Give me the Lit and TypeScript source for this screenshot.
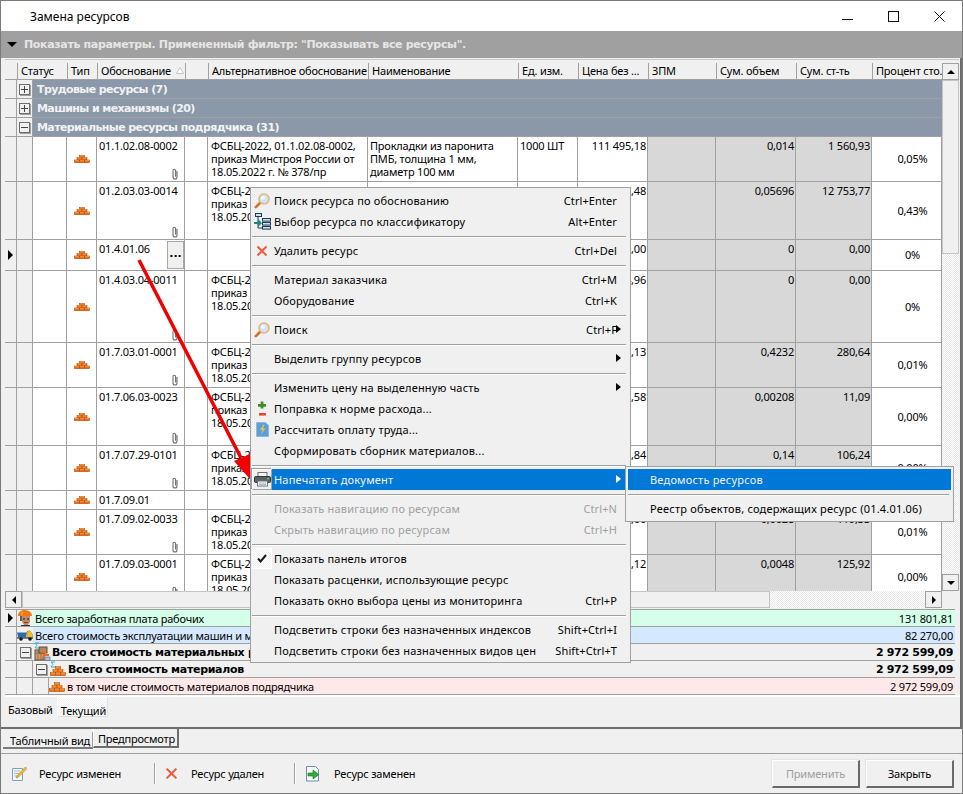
import { LitElement, html, css, svg, nothing, unsafeCSS } from "lit";
import { customElement } from "lit/decorators.js";

const COLS = [12, 16, 34, 30, 88, 23, 160, 150, 60, 70, 68, 80, 76, 70];
const colTemplate = unsafeCSS(COLS.map((c) => c + "px").join(" "));

const icon = (w: number, h: number, body: unknown) =>
  html`<svg class="ico" width=${w} height=${h} viewBox="0 0 ${w} ${h}">${body}</svg>`;

const brick = () =>
  icon(16, 8, svg`
    <g fill="#e8701a" stroke="#b04a08" stroke-width=".6">
      <rect x=".5" y="5" width="5" height="2.6"/><rect x="5.5" y="5" width="5" height="2.6"/><rect x="10.5" y="5" width="5" height="2.6"/>
      <rect x="3" y="2.6" width="5" height="2.4"/><rect x="8" y="2.6" width="5" height="2.4"/>
      <rect x="5.5" y=".4" width="5" height="2.2"/>
    </g>
    <path d="M1 5.4h4M6 5.4h4M11 5.4h4M3.500 3h4M8.500 3h4M6 .8h4" stroke="#ffb060" stroke-width=".7"/>`);

const brickBig = () =>
  icon(16, 11, svg`
    <g fill="#ec7a1c" stroke="#b04a08" stroke-width=".6">
      <rect x=".5" y="7.5" width="5" height="3"/><rect x="5.5" y="7.5" width="5" height="3"/><rect x="10.5" y="7.5" width="5" height="3"/>
      <rect x="3" y="4.5" width="5" height="3"/><rect x="8" y="4.5" width="5" height="3"/>
      <rect x="5.5" y="1.5" width="5" height="3"/>
    </g>
    <path d="M1 8h4M6 8h4M11 8h4M3.500 5h4M8.500 5h4M6 2h4" stroke="#ffb868" stroke-width=".7"/>`);

const sigmaMark = () =>
  html`<svg class="sigma" width="6" height="7" viewBox="0 0 6 7"><path d="M5 1H1l2 2.500L1 6h4" fill="none" stroke="#28b4d8" stroke-width="1"/></svg>`;

const sigmaBrick = () => html`<span class="sigma-wrap">${brickBig()}${sigmaMark()}</span>`;

const clip = () =>
  icon(8, 12, svg`<path d="M6 3v6a2 2 0 0 1-4 0V2.600a1.300 1.300 0 0 1 2.600 0V8.500" fill="none" stroke="#6f6f6f" stroke-width="1.100"/>`);

const lens = () =>
  icon(16, 16, svg`
    <path d="M6.500 9.500 1.800 14.200" stroke="#d07428" stroke-width="2.600" stroke-linecap="round"/>
    <circle cx="10" cy="6" r="5" fill="#d0e2f6" stroke="#e6b27c" stroke-width="1.500"/>
    <circle cx="9" cy="5" r="2" fill="#f6faff"/>`);

const treeIco = () =>
  icon(17, 17, svg`
    <rect x="1.500" y=".5" width="6" height="3" fill="#cfe0ee" stroke="#1e3d54"/>
    <rect x="8.500" y="5.500" width="8" height="2.600" fill="#cfe0ee" stroke="#1e3d54"/>
    <rect x="8.500" y="9.500" width="8" height="2.600" fill="#cfe0ee" stroke="#1e3d54"/>
    <rect x="8.500" y="13.500" width="8" height="2.600" fill="#cfe0ee" stroke="#1e3d54"/>
    <path d="M4 4v11h4" fill="none" stroke="#1e3d54"/>
    <path d="M0 9h4V6l4 4-4 4v-3H0z" fill="#178a86"/>`);

const redX = (s = 12) =>
  icon(s, s, svg`<path d="M1.500 1.500 10.500 10.500M10.500 1.500 1.500 10.500" stroke="#f0583a" stroke-width="1.900" transform="scale(${s / 12})"/>`);

const plusMinus = () =>
  icon(9, 16, svg`
    <path d="M3 1h3v3h3v3H6v2H3V7H0V4h3z" fill="#3c8c20" transform="translate(0 -.5) scale(.9)"/>
    <rect x="1" y="12" width="7" height="2.600" fill="#e8482a"/>`);

const calcIco = () =>
  icon(13, 15, svg`
    <path d="M.5.500h9l3 3v11H.5z" fill="#5aa0e0" stroke="#8eb8dc"/>
    <path d="M7.500 2.500 4 8h2.500L5 12.500 9.500 6.500H7L8.500 2.500z" fill="#f4c430"/>`);

const printer = () =>
  icon(17, 15, svg`
    <rect x="4" y=".5" width="9" height="5" fill="#f2f2f2" stroke="#707070"/>
    <rect x=".5" y="4.500" width="16" height="6" rx="1" fill="#5a6068" stroke="#33373c"/>
    <rect x="13" y="6" width="2" height="1.400" fill="#5fd04a"/>
    <rect x="3.500" y="9" width="10" height="5" fill="#fff" stroke="#707070"/>
    <path d="M5 11h7M5 12.600h7" stroke="#9ab4d8"/>`);

const check = () =>
  icon(10, 9, svg`<path d="M1 4.500 3.600 7.500 9 1" fill="none" stroke="#1a1a1a" stroke-width="2"/>`);

const worker = () =>
  icon(16, 16, svg`
    <path d="M5 6h8v6l-2 3H7L5 12z" fill="#c08a68"/>
    <path d="M6 9h2M10 9h2" stroke="#221a14"/>
    <path d="M7 12.500h4" stroke="#7a3c24"/>
    <path d="M1 6c0-4 3-6 6.500-6S15 2 15 6H4z" fill="#f07a18"/>
    <path d="M5 1.500v4" stroke="#ffb060"/>
    <path d="M4 15h9v1H4z" fill="#303840"/>
    <path d="M4 6v5" stroke="#3a2a20" stroke-width="1.500"/>`);

const truck = () =>
  icon(17, 12, svg`
    <path d="M0 3.500h10L9 8H1z" fill="#2e6ab4"/>
    <path d="M10 2h3l3 4v3H10z" fill="#f0c020" stroke="#a08010" stroke-width=".5"/>
    <rect x="0" y="8" width="17" height="1.800" fill="#5a6a7a"/>
    <circle cx="4" cy="10" r="1.800" fill="#181818"/><circle cx="13" cy="10" r="1.800" fill="#181818"/>`);

const crate = () =>
  html`<span class="sigma-wrap">${icon(17, 15, svg`
    <rect x="1" y="4" width="9" height="10" fill="#c8a078" stroke="#6b4a30"/>
    <path d="M1 7h9M4 4v10M7 4v10" stroke="#8a6848" stroke-width=".8"/>
    <rect x="5" y="1" width="8" height="6" fill="#b08868" stroke="#6b4a30"/>
    <path d="M7 6h5M9 9h6M8 12h7" stroke="#e8701a" stroke-width="2"/>
    <rect x="11" y="11" width="5" height="3.500" fill="#a6c4dc" stroke="#506a80" stroke-width=".6"/>`)}${sigmaMark()}</span>`;

const noteIco = () =>
  icon(15, 15, svg`
    <path d="M.5 2.500h10v12H.5z" fill="#f4f8fc" stroke="#7ea2c0"/>
    <path d="M2 5h6M2 7.500h5M2 10h4" stroke="#a8bccc"/>
    <path d="M13.500 1 15 2.500 6.500 11 4.200 12 5 9.500z" fill="#f0c030" stroke="#b07818" stroke-width=".6"/>`);

const replaceIco = () =>
  icon(15, 16, svg`
    <path d="M.5.500h9l3 3v11.500H.5z" fill="#f4f8fc" stroke="#6f8da8"/>
    <path d="M2 7h5V4l6 4.500L7 13v-3H2z" fill="#36a838" stroke="#1c7420" stroke-width=".6"/>`);

interface Row {
  h: number; code: string; alt?: boolean; name?: string[]; unit?: string; price: string;
  vol: string; sum: string; pct: string; clip?: boolean; btn?: boolean; current?: boolean;
}

const ROWS: Row[] = [
  { h: 45, code: "01.1.02.08-0002", alt: true, name: ["Прокладки из паронита", "ПМБ, толщина 1 мм,", "диаметр 100 мм"], unit: "1000 ШТ", price: "111 495,18", vol: "0,014", sum: "1 560,93", pct: "0,05%", clip: true },
  { h: 58, code: "01.2.03.03-0014", alt: true, name: ["Материалы"], unit: "т", price: "223 907,48", vol: "0,05696", sum: "12 753,77", pct: "0,43%", clip: true },
  { h: 31, code: "01.4.01.06", price: "0,00", vol: "0", sum: "0,00", pct: "0%", btn: true, current: true },
  { h: 72, code: "01.4.03.04-0011", alt: true, price: "1 234,96", vol: "0", sum: "0,00", pct: "0%", clip: true },
  { h: 45, code: "01.7.03.01-0001", alt: true, price: "663,13", vol: "0,4232", sum: "280,64", pct: "0,01%", clip: true },
  { h: 58, code: "01.7.06.03-0023", alt: true, price: "5 331,58", vol: "0,00208", sum: "11,09", pct: "0,00%", clip: true },
  { h: 45, code: "01.7.07.29-0101", alt: true, price: "758,84", vol: "0,14", sum: "106,24", pct: "0,00%", clip: true },
  { h: 19, code: "01.7.09.01", price: "0,00", vol: "0", sum: "0,00", pct: "0%" },
  { h: 45, code: "01.7.09.02-0033", alt: true, price: "42 618,00", vol: "0,0028", sum: "119,33", pct: "0,01%", clip: true },
  { h: 45, code: "01.7.09.03-0001", alt: true, price: "26 233,12", vol: "0,0048", sum: "125,92", pct: "0,00%", clip: true },
];

const HEAD: string[] = [
  "Статус", "Тип", "Обоснование", "", "Альтернативное обоснование",
  "Наименование", "Ед. изм.", "Цена без ...", "ЗПМ", "Сум. объем",
  "Сум. ст-ть", "Процент сто.",
];

type MenuEntry = "sep" | { t: string; k?: string; i?: unknown; sub?: boolean; dis?: boolean; sel?: boolean; chk?: boolean };
const MENU: MenuEntry[] = [
  { t: "Поиск ресурса по обоснованию", k: "Ctrl+Enter", i: lens() },
  { t: "Выбор ресурса по классификатору", k: "Alt+Enter", i: treeIco() },
  "sep",
  { t: "Удалить ресурс", k: "Ctrl+Del", i: redX() },
  "sep",
  { t: "Материал заказчика", k: "Ctrl+M" },
  { t: "Оборудование", k: "Ctrl+K" },
  "sep",
  { t: "Поиск", k: "Ctrl+F", i: lens(), sub: true },
  "sep",
  { t: "Выделить группу ресурсов", sub: true },
  "sep",
  { t: "Изменить цену на выделенную часть", sub: true },
  { t: "Поправка к норме расхода...", i: plusMinus() },
  { t: "Рассчитать оплату труда...", i: calcIco() },
  { t: "Сформировать сборник материалов..." },
  "sep",
  { t: "Напечатать документ", i: printer(), sub: true, sel: true },
  "sep",
  { t: "Показать навигацию по ресурсам", k: "Ctrl+N", dis: true },
  { t: "Скрыть навигацию по ресурсам", k: "Ctrl+H", dis: true },
  "sep",
  { t: "Показать панель итогов", i: check(), chk: true },
  { t: "Показать расценки, использующие ресурс" },
  { t: "Показать окно выбора цены из мониторинга", k: "Ctrl+P" },
  "sep",
  { t: "Подсветить строки без назначенных индексов", k: "Shift+Ctrl+I" },
  { t: "Подсветить строки без назначенных видов цен", k: "Shift+Ctrl+T" },
];

@customElement("app-root")
export class AppRoot extends LitElement {
  static styles = css`
    :host {
      display: block; position: relative; width: 963px; height: 794px; overflow: hidden;
      font: 11px/13px "Noto Sans", "Open Sans", sans-serif; letter-spacing: -.2px; color: #000; background: #f0f0f0;
    }
    * { box-sizing: border-box; }
    .ico { display: block; flex: none; }
    .win { height: 794px; display: flex; flex-direction: column; border: 1px solid #7a7a7a; }
    .title { height: 30px; flex: none; background: #fff; display: flex; align-items: center; padding-left: 29px; font-size: 12px; letter-spacing: 0; }
    .title span { flex: 1; }
    .wc { width: 46px; height: 30px; display: flex; align-items: center; justify-content: center; }
    .page { flex: none; height: 698px; border-right: 2px solid #6d6d6d; border-bottom: 2px solid #6d6d6d; display: flex; flex-direction: column; }
    .filter {
      height: 27px; flex: none; background: #a0a0a0; color: #e6e6e6; display: flex; align-items: center; gap: 7px; padding-left: 5px;
      font: bold 11px "DejaVu Sans", sans-serif; letter-spacing: -.34px; margin-right: -2px;
    }
    .tri-down { width: 0; height: 0; border: 5px solid transparent; border-top: 5px solid #000; border-bottom: 0; margin-left: 1px; }
    .table { margin: 1px 0 0 4px; padding-top: 3px; height: 548px; flex: none; border-top: 1px solid #c8c8c8; background: #f0f0f0; width: 954px; display: flex; flex-direction: column; }
    .main { display: flex; height: 528px; flex: none; }
    .grid { width: 937px; flex: none; overflow: hidden; background: #fff; }
    .r { display: grid; grid-template-columns: ${colTemplate}; }
    .head { height: 17px; background: #f0f0f0; grid-template-columns: 12px 50px 30px 88px 23px 160px 150px 60px 70px 68px 80px 76px 70px; border-bottom: 1px solid #a0a0a0; }
    .hc { border-left: 1px solid #a0a0a0; padding: 1px 0 0 3px; white-space: nowrap; overflow: hidden; line-height: 14px; position: relative; }
    .sort { position: absolute; right: 1px; top: 4px; }
    .grp { height: 19px; display: flex; background: #f0f0f0; border-bottom: 1px solid #a0a0a0; }
    .ind { width: 12px; flex: none; background: #f0f0f0; border-right: 1px solid #a0a0a0; display: flex; align-items: center; justify-content: center; }
    .exp { width: 16px; flex: none; display: flex; align-items: center; justify-content: center; border-right: 1px solid #a0a0a0; }
    .box { width: 11px; height: 11px; border: 1px solid #6d6d6d; background: #f0f0f0; position: relative; box-shadow: 1px 1px 0 #a0a0a0; }
    .box::before { content: ""; position: absolute; left: 1px; right: 1px; top: 4px; height: 1px; background: #444; }
    .box.plus::after { content: ""; position: absolute; top: 1px; bottom: 1px; left: 4px; width: 1px; background: #444; }
    .gt { flex: 1; background: #8b98a9; color: #f2f2f2; padding: 1px 0 0 4px; font: bold 11px/18px "DejaVu Sans", sans-serif; letter-spacing: -.6px; white-space: nowrap; }
    .c { background: #fff; border-right: 1px solid #a0a0a0; border-bottom: 1px solid #a0a0a0; padding: 2px 1px 0 2px; white-space: nowrap; overflow: hidden; position: relative; }
    .c.side { background: #f0f0f0; padding: 0; display: flex; align-items: center; justify-content: center; }
    .c.g { background: #d8d8d8; }
    .c.num { text-align: right; }
    .c.mid { display: flex; align-items: center; justify-content: center; padding: 0; }
    .c.pct { display: flex; align-items: center; justify-content: center; padding: 0 0 1px 12px; }
    .c.alt { padding-left: 3px; }
    .clip { position: absolute; right: 5px; bottom: 1px; }
    .dots { position: absolute; right: 0; top: 1px; width: 17px; height: 28px; background: #f0f0f0; border: 1px solid #a8a8a8; font: bold 11px/24px "DejaVu Sans", sans-serif; text-align: center; letter-spacing: 0; }
    .tri-r { width: 0; height: 0; border: 5px solid transparent; border-left: 5px solid #000; border-right: 0; }
    .vs { width: 17px; flex: none; display: flex; flex-direction: column; background: repeating-conic-gradient(#fff 0 25%, #e8e8e8 0 50%) 0 0 / 2px 2px; }
    .sb { flex: none; width: 17px; height: 17px; background: #f0f0f0; border: 1px solid #a0a0a0; display: flex; align-items: center; justify-content: center; }
    .thumb { background: #f0f0f0; border: 1px solid #c4c4c4; }
    .thumb.v { height: 174px; }
    .thumb.h { width: 748px; }
    .tri-u { width: 0; height: 0; border: 4px solid transparent; border-bottom: 4px solid #000; border-top: 0; }
    .tri-d { width: 0; height: 0; border: 4px solid transparent; border-top: 4px solid #000; border-bottom: 0; }
    .tri-l { width: 0; height: 0; border: 4px solid transparent; border-right: 4px solid #000; border-left: 0; }
    .tri-rs { width: 0; height: 0; border: 4px solid transparent; border-left: 4px solid #000; border-right: 0; }
    .hs { height: 17px; width: 937px; flex: none; display: flex; background: repeating-conic-gradient(#fff 0 25%, #e8e8e8 0 50%) 0 0 / 2px 2px; }
    .foot { margin: 2px 0 0 4px; width: 950px; height: 86px; flex: none; border-top: 1px solid #a0a0a0; }
    .fr { height: 17px; display: flex; border-bottom: 1px solid #a0a0a0; align-items: stretch; }
    .fr .fi { width: 16px; flex: none; display: flex; align-items: center; justify-content: center; }
    .fr .lab { flex: 1; display: flex; justify-content: space-between; padding: 0 2px; line-height: 17px; white-space: nowrap; }
    .fr .lab.b { font: bold 11px/17px "DejaVu Sans", sans-serif; letter-spacing: -.3px; }
    .indent { flex: none; width: 16px; border-right: 1px solid #a0a0a0; }
    .fexp { width: 17px; flex: none; padding-left: 3px; display: flex; align-items: center; }
    .green { background: #d4ffe8; } .blue { background: #d4e8ff; } .pink { background: #ffe8e8; }
    .whiteline { height: 2px; flex: none; background: #fff; margin-left: 4px; }
    .subtabs { flex: none; display: flex; align-items: flex-start; padding-left: 6px; }
    .subtabs .st { padding: 6px 4px 0 1px; height: 20px; }
    .subtabs .on { padding: 6px 3px 0 3px; height: 20px; background: repeating-conic-gradient(#fff 0 25%, #f0f0f0 0 50%) 0 0 / 2px 2px; border: 1px solid #fff; border-right-color: #e0e0e0; border-bottom-color: #e0e0e0; width: 51px; }
    .pagetabs { height: 25px; flex: none; display: flex; align-items: flex-start; padding-left: 2px; border-bottom: 1px solid #a0a0a0; }
    .pt1 { width: 90px; height: 17px; margin-top: 3px; border-right: 1px solid #a0a0a0; border-bottom: 2px solid #7a7a7a; padding: 2px 0 0 7px; line-height: 14px; }
    .pt2 { width: 86px; height: 19px; border: 1px solid #6d6d6d; border-top-width: 0; border-left-color: #fff; border-right-width: 2px; border-bottom-width: 2px; padding: 3px 0 0 4px; line-height: 13px; background: #f0f0f0; }
    .status { flex: 1; display: flex; align-items: center; padding: 0 8px 0 11px; }
    .status .txt { margin-left: 13px; }
    .status .txt.w1 { width: 115px; margin-left: 12px; }
    .status .txt.w2 { width: 103px; }
    .status .gap { width: 10px; flex: none; }
    .status .gap.g9 { width: 9px; }
    .status .gapb { width: 6px; flex: none; }
    .vsep { width: 2px; height: 21px; border-left: 1px solid #a0a0a0; border-right: 1px solid #fff; flex: none; }
    .grow { flex: 1; }
    .btn { width: 88px; height: 28px; display: flex; align-items: center; justify-content: center; background: #f0f0f0; border: 1px solid #fff; border-right: 2px solid #696969; border-bottom: 2px solid #696969; box-shadow: -1px -1px 0 #e4e4e4; }
    .btn.dis { color: #a0a0a0; }
    .menu { position: absolute; z-index: 3; left: 250px; top: 187px; width: 381px; height: 476px; background: #f0f0f0; border: 1px solid #a0a0a0; padding: 2px 2px 0 1px; letter-spacing: .2px; }
    .sub { position: absolute; z-index: 4; left: 625px; top: 466px; width: 329px; height: 56px; background: #f0f0f0; border: 1px solid #a0a0a0; padding: 2px; letter-spacing: .2px; }
    .mi { height: 21px; display: flex; align-items: center; color: #000; position: relative; }
    .mi .mic { width: 20px; height: 21px; flex: none; display: flex; align-items: center; justify-content: center; }
    .mi .mt { flex: 1; padding-left: 2px; white-space: nowrap; }
    .mi .mk { padding-right: 11px; white-space: nowrap; letter-spacing: .1px; }
    .mi .ar { position: absolute; right: 7px; top: 6px; width: 0; height: 0; border: 4px solid transparent; border-left: 5px solid #000; border-right: 0; }
    .mi.dis { color: #a0a0a0; }
    .mi.sel .mt { background: none; color: #f2f2f2; height: 21px; line-height: 21px; position: relative; }
    .mi.sel .fill { position: absolute; left: 20px; right: -1px; top: 0; bottom: 0; background: #0078d7; }
    .mi.sel .ar { border-left-color: #fff; }
    .mi.sel .mic { border: 1px solid #fff; border-right-color: #a0a0a0; border-bottom-color: #a0a0a0; box-shadow: -1px -1px 0 #a0a0a0; }
    .mi .mic.chk { background: repeating-conic-gradient(#fff 0 25%, #f0f0f0 0 50%) 0 0 / 2px 2px; border: 1px solid #fff; }
    .msep { height: 8px; display: flex; align-items: center; padding-right: 2px; }
    .msep::before { content: ""; flex: 1; height: 1px; background: #a0a0a0; box-shadow: 0 1px 0 #fff; }
    .sub .mi { padding-left: 22px; }
    .sub .mi.sel { background: #0078d7; color: #f2f2f2; }
    .arrow { position: absolute; left: 0; top: 0; z-index: 2; pointer-events: none; }
    .sigma-wrap { position: relative; display: block; }
    .sigma { position: absolute; left: 0; top: -2px; }
    .sigma-wrap .ico:first-child { margin-top: 2px; }
  `;

  private groupRow(label: string, open: boolean) {
    return html`<div class="grp"><div class="ind"></div><div class="exp"><div class="box ${open ? "" : "plus"}"></div></div><div class="gt">${label}</div></div>`;
  }

  private dataRow(r: Row) {
    return html`<div class="r" style="height:${r.h}px">
      <div class="c side">${r.current ? html`<div class="tri-r"></div>` : nothing}</div>
      <div class="c side"></div>
      <div class="c"></div>
      <div class="c mid">${brick()}</div>
      <div class="c">${r.code}${r.clip ? html`<span class="clip">${clip()}</span>` : nothing}${r.btn ? html`<span class="dots">...</span>` : nothing}</div>
      <div class="c"></div>
      <div class="c alt">${r.alt ? html`ФСБЦ-2022, ${r.code},<br />приказ Минстроя России от<br />18.05.2022 г. № 378/пр` : nothing}</div>
      <div class="c">${(r.name ?? []).map((l) => html`${l}<br />`)}</div>
      <div class="c">${r.unit ?? ""}</div>
      <div class="c num">${r.price}</div>
      <div class="c g"></div>
      <div class="c g num">${r.vol}</div>
      <div class="c g num">${r.sum}</div>
      <div class="c pct">${r.pct}</div>
    </div>`;
  }

  private menuItem(m: Exclude<MenuEntry, "sep">) {
    return html`<div class="mi ${m.dis ? "dis" : ""} ${m.sel ? "sel" : ""}">
      ${m.sel ? html`<div class="fill"></div>` : nothing}
      <div class="mic ${m.chk ? "chk" : ""}">${m.i ?? nothing}</div>
      <div class="mt">${m.t}</div>
      ${m.k ? html`<div class="mk">${m.k}</div>` : nothing}
      ${m.sub ? html`<div class="ar"></div>` : nothing}
    </div>`;
  }

  render() {
    return html`
      <div class="win">
        <div class="title">
          <span>Замена ресурсов</span>
          <div class="wc"><svg width="11" height="10"><path d="M0 8.500h11" stroke="#111"/></svg></div>
          <div class="wc"><svg width="11" height="11"><rect x=".5" y=".5" width="10" height="10" fill="none" stroke="#111"/></svg></div>
          <div class="wc"><svg width="11" height="11"><path d="M.5.500 10.500 10.500M10.500.5.500 10.500" stroke="#111"/></svg></div>
        </div>
        <div class="page">
          <div class="filter"><div class="tri-down"></div>Показать параметры. Примененный фильтр: "Показывать все ресурсы".</div>
          <div class="table">
            <div class="main">
              <div class="grid">
                <div class="r head">
                  <div></div>
                  ${HEAD.map((t, i) => html`<div class="hc">${t}${i === 2 ? html`<svg class="sort" width="8" height="7"><path d="M4 .5 7.500 6.500H.5z" fill="#fff" stroke="#c4c4c4"/></svg>` : nothing}</div>`)}
                </div>
                ${this.groupRow("Трудовые ресурсы (7)", false)}
                ${this.groupRow("Машины и механизмы (20)", false)}
                ${this.groupRow("Материальные ресурсы подрядчика (31)", true)}
                ${ROWS.map((r) => this.dataRow(r))}
              </div>
              <div class="vs">
                <div class="sb"><div class="tri-u"></div></div>
                <div class="thumb v"></div>
                <div class="grow"></div>
                <div class="sb"><div class="tri-d"></div></div>
              </div>
            </div>
            <div class="hs">
              <div class="sb"><div class="tri-l"></div></div>
              <div class="thumb h"></div>
              <div class="grow"></div>
              <div class="sb"><div class="tri-rs"></div></div>
            </div>
          </div>
          <div class="foot">
            <div class="fr">
              <div class="ind"><div class="tri-r"></div></div><div class="fi">${worker()}</div>
              <div class="lab green"><span>Всего заработная плата рабочих</span><span>131 801,81</span></div>
            </div>
            <div class="fr">
              <div class="ind"></div><div class="fi">${truck()}</div>
              <div class="lab blue"><span>Всего стоимость эксплуатации машин и механизмов</span><span>82 270,00</span></div>
            </div>
            <div class="fr">
              <div class="ind"></div><div class="fexp"><div class="box"></div></div><div class="fi">${crate()}</div>
              <div class="lab b"><span>Всего стоимость материальных ресурсов</span><span>2 972 599,09</span></div>
            </div>
            <div class="fr">
              <div class="ind"></div><div class="indent"></div><div class="fexp"><div class="box"></div></div><div class="fi">${sigmaBrick()}</div>
              <div class="lab b"><span>Всего стоимость материалов</span><span>2 972 599,09</span></div>
            </div>
            <div class="fr">
              <div class="ind"></div><div class="indent"></div><div class="indent"></div><div class="fi">${brickBig()}</div>
              <div class="lab pink"><span>в том числе стоимость материалов подрядчика</span><span>2 972 599,09</span></div>
            </div>
          </div>
          <div class="whiteline"></div>
          <div class="subtabs"><div class="st">Базовый</div><div class="on">Текущий</div></div>
        </div>
        <div class="pagetabs"><div class="pt1">Табличный вид</div><div class="pt2">Предпросмотр</div></div>
        <div class="status">
          ${noteIco()}<span class="txt w1">Ресурс изменен</span><div class="vsep"></div>
          <span class="gap g9"></span>${redX(13)}<span class="txt w2">Ресурс удален</span><div class="vsep"></div>
          <span class="gap"></span>${replaceIco()}<span class="txt">Ресурс заменен</span>
          <div class="grow"></div>
          <div class="btn dis">Применить</div><span class="gapb"></span><div class="btn">Закрыть</div>
        </div>
      </div>
      <svg class="arrow" width="963" height="794" viewBox="0 0 963 794">
        <path d="M139 260 241 458" stroke="#f00000" stroke-width="3.500"/>
        <path d="M234 461 252 453 256 486z" fill="#f00000"/>
      </svg>
      <div class="menu">${MENU.map((m) => (m === "sep" ? html`<div class="msep"></div>` : this.menuItem(m)))}</div>
      <div class="sub">
        <div class="mi sel">Ведомость ресурсов</div>
        <div class="msep"></div>
        <div class="mi">Реестр объектов, содержащих ресурс (01.4.01.06)</div>
      </div>
    `;
  }
}
